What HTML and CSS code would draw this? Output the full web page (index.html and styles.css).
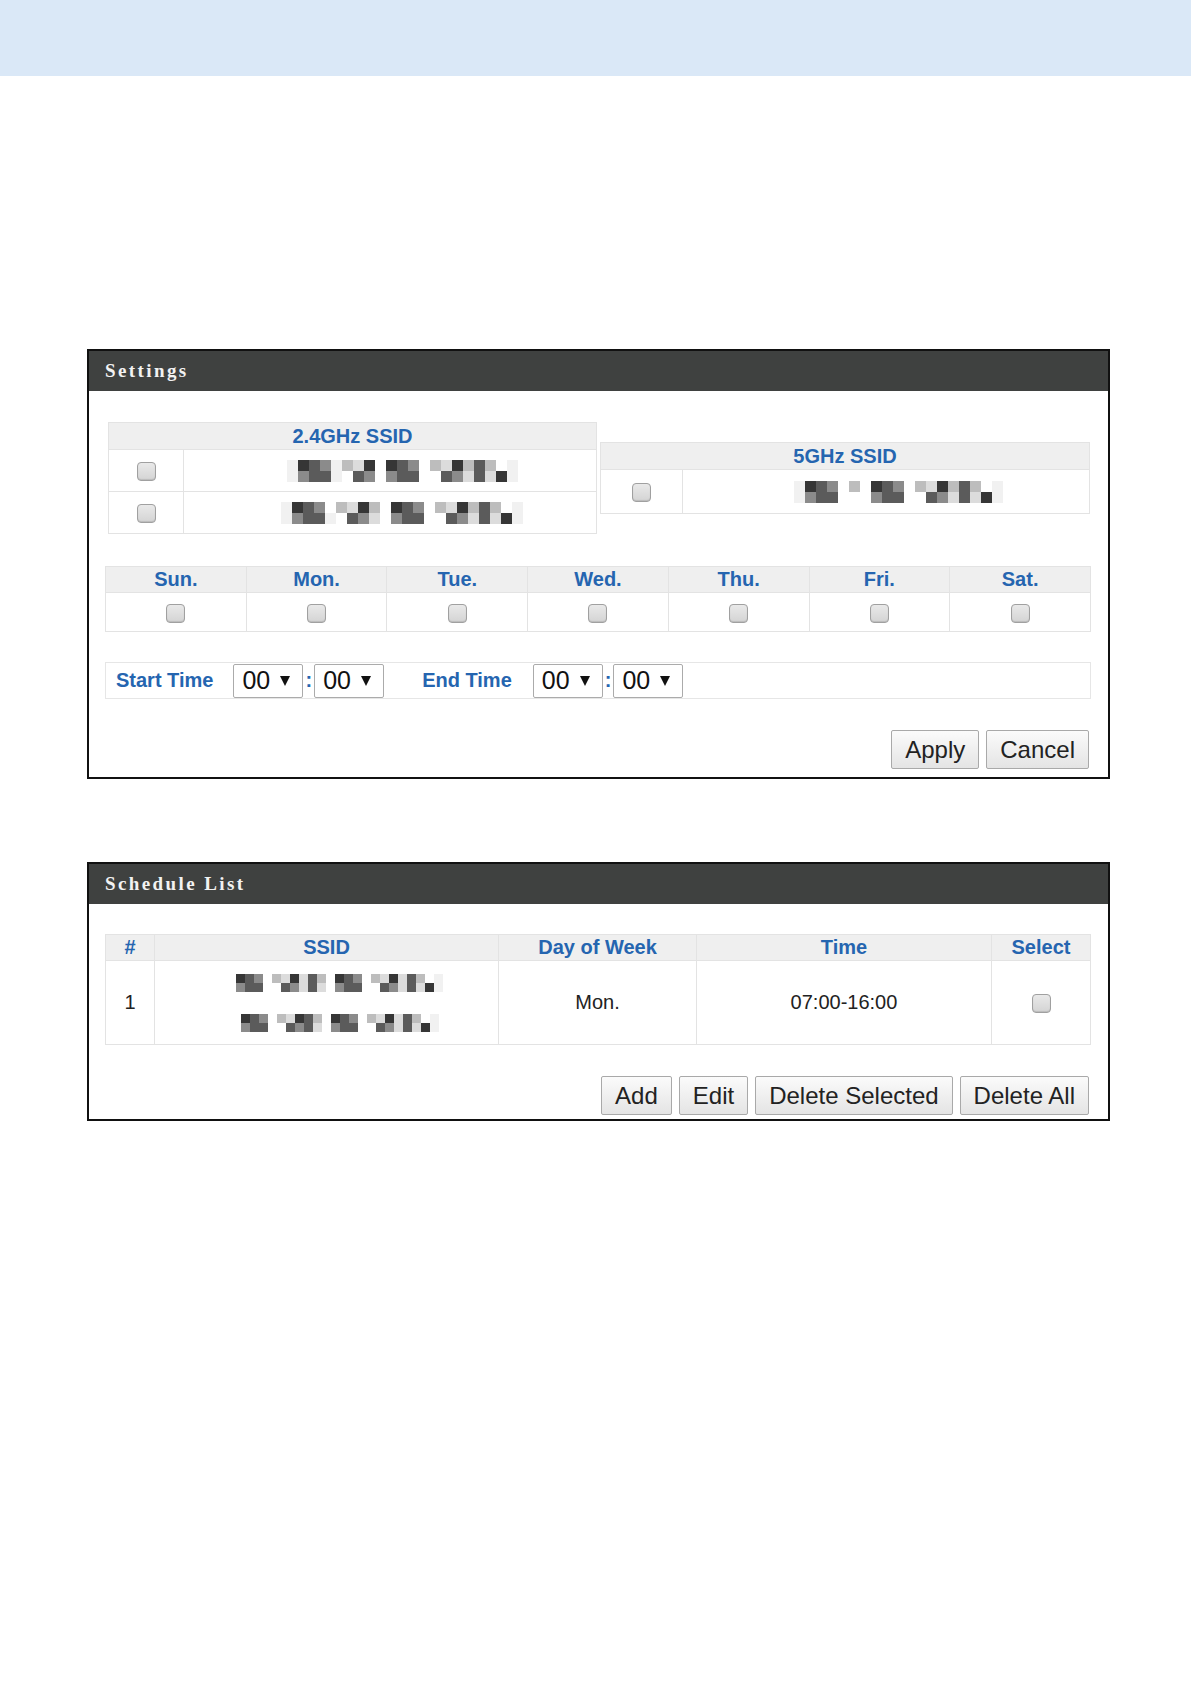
FILE: index.html
```html
<!DOCTYPE html>
<html lang="en">
  <head>
    <meta charset="UTF-8" />
    <meta name="viewport" content="width=device-width, initial-scale=1.0" />
    <title>Wireless Schedule</title>
    <link rel="stylesheet" href="styles.css">
  </head>
  <body>
    <div class="topband"></div>

    <div class="page">
      <!-- Settings panel -->
      <section class="panel">
        <div class="panel-head">Settings</div>
        <div class="panel-body settings-body">
          <div class="ssid-row">
            <table class="grid ssid ssid-24">
              <colgroup><col class="c-chk" /><col /></colgroup>
              <tr><th colspan="2">2.4GHz SSID</th></tr>
              <tr>
                <td><input type="checkbox" class="chk" /></td>
                <td class="name"><span class="mosaic" data-top="f543f215.543.215242.f" data-bottom="f344f.43.344..431415f"></span></td>
              </tr>
              <tr>
                <td><input type="checkbox" class="chk" /></td>
                <td class="name"><span class="mosaic" data-top="f543.2152.543.215242.f" data-bottom="f344f.431.344..431415f"></span></td>
              </tr>
            </table>

            <table class="grid ssid ssid-5">
              <colgroup><col class="c-chk" /><col /></colgroup>
              <tr><th colspan="2">5GHz SSID</th></tr>
              <tr>
                <td><input type="checkbox" class="chk" /></td>
                <td class="name"><span class="mosaic" data-top="f543.2.543.215242.f" data-bottom="f344...344..431415f"></span></td>
              </tr>
            </table>
          </div>

          <table class="grid days">
            <tr>
              <th>Sun.</th><th>Mon.</th><th>Tue.</th><th>Wed.</th><th>Thu.</th><th>Fri.</th><th>Sat.</th>
            </tr>
            <tr>
              <td><input type="checkbox" class="chk" /></td>
              <td><input type="checkbox" class="chk" /></td>
              <td><input type="checkbox" class="chk" /></td>
              <td><input type="checkbox" class="chk" /></td>
              <td><input type="checkbox" class="chk" /></td>
              <td><input type="checkbox" class="chk" /></td>
              <td><input type="checkbox" class="chk" /></td>
            </tr>
          </table>

          <div class="time-row">
            <span class="label">Start Time</span>
            <span class="sel start-h">00<i class="arrow"></i></span>
            <span class="colon">:</span>
            <span class="sel">00<i class="arrow"></i></span>
            <span class="label end-label">End Time</span>
            <span class="sel end-h">00<i class="arrow"></i></span>
            <span class="colon">:</span>
            <span class="sel">00<i class="arrow"></i></span>
          </div>

          <div class="actions">
            <button type="button">Apply</button>
            <button type="button">Cancel</button>
          </div>
        </div>
      </section>

      <!-- Schedule list panel -->
      <section class="panel schedule">
        <div class="panel-head">Schedule List</div>
        <div class="panel-body list-body">
          <table class="grid list">
            <tr>
              <th class="c-num">#</th>
              <th class="c-ssid">SSID</th>
              <th class="c-day">Day of Week</th>
              <th class="c-time">Time</th>
              <th class="c-sel">Select</th>
            </tr>
            <tr>
              <td>1</td>
              <td class="name">
                <div class="stack">
                  <span class="mosaic small" data-top="543.215142.543.215142.f" data-bottom="344..43141.344..431415f"></span>
                  <span class="mosaic small" data-top="543.21542.543.215142.f" data-bottom="344..4341.344..431415f"></span>
                </div>
              </td>
              <td>Mon.</td>
              <td>07:00-16:00</td>
              <td><input type="checkbox" class="chk" /></td>
            </tr>
          </table>

          <div class="actions">
            <button type="button">Add</button>
            <button type="button">Edit</button>
            <button type="button">Delete Selected</button>
            <button type="button">Delete All</button>
          </div>
        </div>
      </section>
    </div>

    <script>
      // blurred SSID names: two rows of grey squares
      document.querySelectorAll(".mosaic").forEach(function (el) {
        var top = el.dataset.top;
        var bottom = el.dataset.bottom;
        for (var i = 0; i < top.length; i++) {
          [top[i], bottom[i]].forEach(function (c) {
            var cell = document.createElement("span");
            if (c !== ".") cell.className = "s" + c;
            el.appendChild(cell);
          });
        }
      });
    </script>
  </body>
</html>
```

FILE: styles.css
```css
body {
  font-family: "Liberation Sans", Arial, sans-serif;
  background-color: #fff;
  color: #222;
  margin: 0;
  padding: 0;
}

.topband {
  height: 76px;
  background-color: #dae8f7;
}

.page {
  width: 1023px;
  margin-left: 87px;
  padding-top: 273px;
}

/* Panels */
.panel {
  border: 2px solid #111;
}

.schedule {
  margin-top: 83px;
}

.panel-head {
  height: 40px;
  line-height: 40px;
  padding-left: 16px;
  background-color: #3f4140;
  color: #f2f2f2;
  font-family: "Liberation Serif", "Times New Roman", serif;
  font-weight: bold;
  font-size: 19px;
  letter-spacing: 2.4px;
}

.panel-body {
  padding: 31px 17px 8px 16px;
}

.list-body {
  padding-top: 30px;
  padding-bottom: 4px;
}

/* Tables */
.grid {
  border-collapse: collapse;
  table-layout: fixed;
}

.grid th,
.grid td {
  border: 1px solid #e3e3e3;
  text-align: center;
  padding: 0;
}

.grid th {
  background-color: #efefef;
  color: #2565b0;
  font-weight: bold;
  font-size: 20px;
  height: 26px;
}

.grid td {
  font-size: 20px;
  color: #222;
}

.ssid-row {
  display: flex;
  align-items: center;
  gap: 3px;
  padding-left: 3px;
}

.ssid-24 {
  width: 489px;
}

.ssid-24 .c-chk {
  width: 75px;
}

.ssid-24 td {
  height: 41px;
}

.ssid-5 {
  width: 490px;
}

.ssid-5 .c-chk {
  width: 82px;
}

.ssid-5 td {
  height: 43px;
}

.ssid .name {
  padding-left: 24px;
}

.days {
  width: 986px;
  margin-top: 32px;
}

.days th {
  height: 25px;
}

.days td {
  height: 38px;
}

.list {
  width: 986px;
}

.list th {
  height: 25px;
}

.list td {
  height: 83px;
}

.list .name {
  padding-left: 26px;
}

.c-num { width: 48px; }
.c-ssid { width: 343px; }
.c-day { width: 197px; }
.c-time { width: 294px; }

.stack {
  display: flex;
  flex-direction: column;
  align-items: center;
  gap: 22px;
}

/* Checkboxes */
.chk {
  appearance: none;
  width: 19px;
  height: 19px;
  margin: 0;
  border: 1px solid #a0a0a0;
  border-radius: 4px;
  background: linear-gradient(#e9e9e9, #d4d4d4);
  box-shadow: inset 0 -1px 1px rgba(0, 0, 0, 0.12);
  vertical-align: middle;
}

/* Mosaic blocks */
.mosaic {
  display: inline-grid;
  grid-auto-flow: column;
  grid-template-rows: repeat(2, 11px);
  grid-auto-columns: 11px;
  vertical-align: middle;
}

.mosaic.small {
  grid-template-rows: repeat(2, 9px);
  grid-auto-columns: 9px;
}

.sf { background-color: #f1f1f1; }
.s1 { background-color: #dcdcdc; }
.s2 { background-color: #bdbdbd; }
.s3 { background-color: #8b8b8b; }
.s4 { background-color: #5b5b5b; }
.s5 { background-color: #363636; }

/* Time row */
.time-row {
  display: flex;
  align-items: center;
  height: 35px;
  margin-top: 30px;
  padding-left: 10px;
  border: 1px solid #e6e6e6;
}

.label {
  color: #2565b0;
  font-weight: bold;
  font-size: 20px;
}

.sel {
  display: flex;
  align-items: center;
  justify-content: space-between;
  box-sizing: border-box;
  width: 70px;
  height: 34px;
  padding: 0 12px 0 8px;
  border: 1px solid #ababab;
  border-radius: 2px;
  font-size: 25px;
  color: #111;
}

.start-h {
  margin-left: 20px;
}

.end-label {
  margin-left: 38px;
}

.end-h {
  margin-left: 21px;
}

.colon {
  color: #2565b0;
  font-weight: bold;
  font-size: 20px;
  margin: 0 2px;
}

.arrow {
  width: 0;
  height: 0;
  border-left: 5px solid transparent;
  border-right: 5px solid transparent;
  border-top: 10px solid #111;
}

/* Buttons */
.actions {
  display: flex;
  justify-content: flex-end;
  gap: 7px;
  margin-top: 31px;
  padding-right: 2px;
}

.actions button {
  height: 39px;
  padding: 0 13px;
  font-family: "Liberation Sans", Arial, sans-serif;
  font-size: 24px;
  color: #222;
  border: 1px solid #a9a9a9;
  border-radius: 2px;
  background: linear-gradient(#fbfbfb, #e4e4e4);
  cursor: pointer;
}
```
